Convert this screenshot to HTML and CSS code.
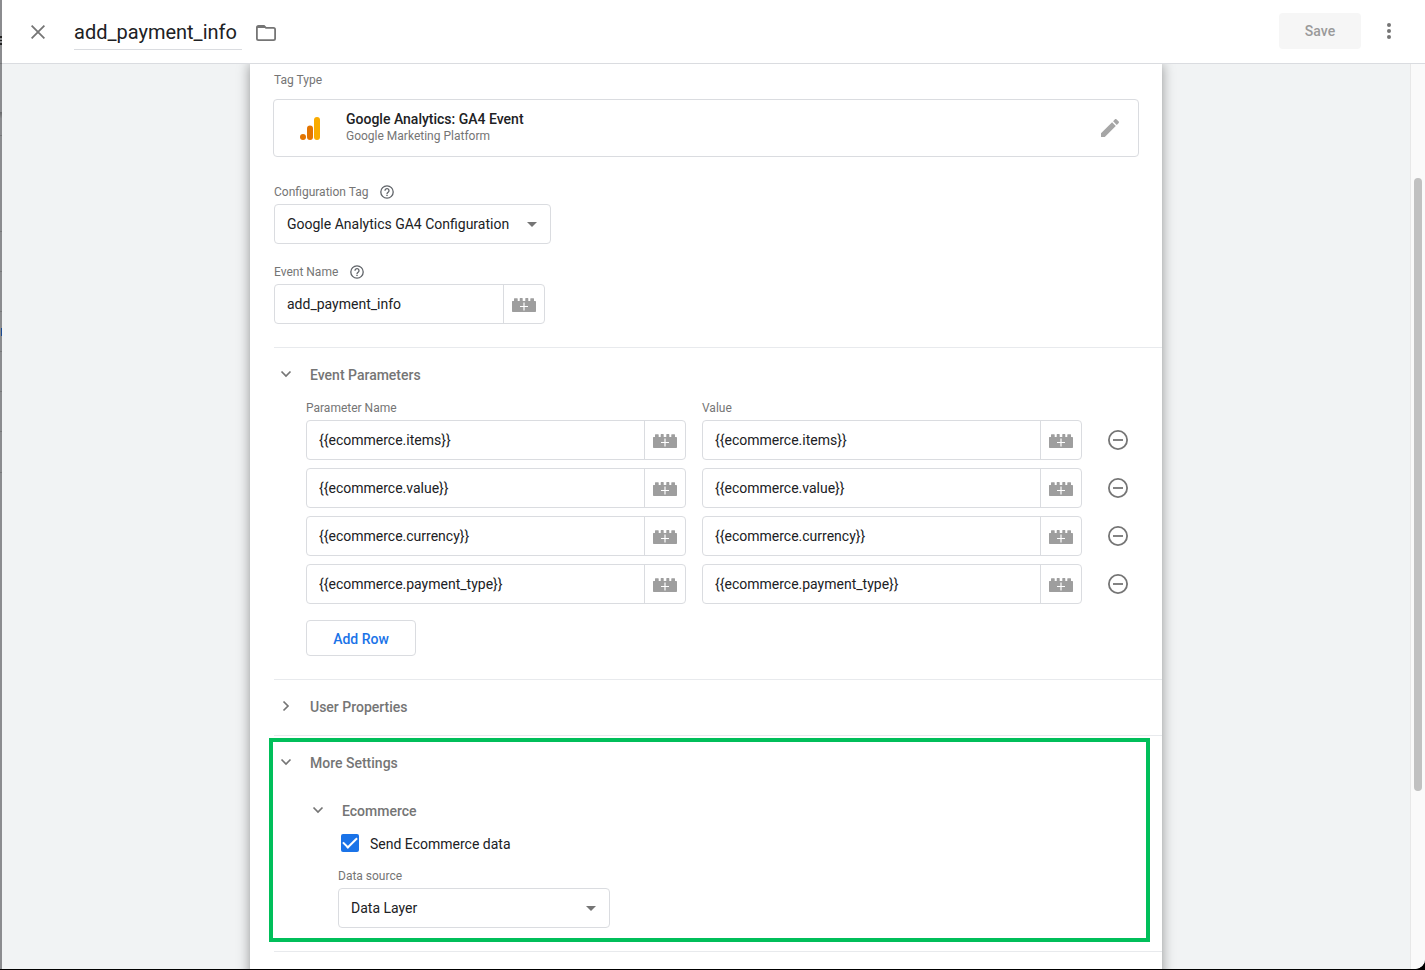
FILE: index.html
```html
<!DOCTYPE html>
<html lang="en">
<head>
<meta charset="utf-8">
<title>add_payment_info</title>
<meta name="viewport" content="width=device-width, initial-scale=1">
<link rel="stylesheet" href="styles.css">
</head>
<body>
<svg class="sprite" aria-hidden="true">
  <symbol id="brick" viewBox="0 0 24 14"><path fill="#9e9e9e" d="M.5 3H2V.8Q2 .3 2.500.3h2.700q.5 0 .5.500V3h2V.5Q7.700 0 8.200 0h2q.5 0 .5.500V3h2.600V.5q0-.5.5-.5h2q.5 0 .5.500V3h2V.8q0-.5.5-.5h2.700q.5 0 .5.500V3h1.300q.7 0 .7.700v9.600q0 .7-.7.700H.7q-.7 0-.7-.7V3.500Q0 3 .5 3z"/><path stroke="#fff" stroke-width="1.200" d="M12 4.500v8M8 8.500h8"/></symbol>
  <symbol id="help" viewBox="0 0 14 14"><circle cx="7" cy="7" r="6.200" fill="none" stroke="#5f6368" stroke-width="1.300"/><path fill="none" stroke="#5f6368" stroke-width="1.300" d="M5 5.700a2 2 0 1 1 3.300 1.400C7.500 7.700 7 8 7 8.900"/><path fill="#5f6368" d="M6.300 9.700h1.400V11H6.300z"/></symbol>
  <symbol id="minus" viewBox="0 0 20 20"><circle cx="10" cy="10" r="9.100" fill="none" stroke="#757575" stroke-width="1.800"/><path stroke="#757575" stroke-width="1.800" d="M5 10h10"/></symbol>
  <symbol id="chevron" viewBox="0 0 12 12"><path fill="none" stroke="#757575" stroke-width="1.700" d="M1.500 3.500L6 8l4.500-4.500"/></symbol>
  <symbol id="arrow" viewBox="0 0 10 5"><path fill="#757575" d="M0 0h10L5 5z"/></symbol>
</svg>
<div class="app">
  <div class="backdrop"></div>
  <div class="sheet">
    <header class="topbar">
      <button class="icon-btn close" type="button" aria-label="Close"><svg width="14" height="14" viewBox="0 0 14 14"><path stroke="#757575" stroke-width="1.800" d="M.6.600l12.800 12.800M13.400.6L.6 13.400"/></svg></button>
      <input class="title" type="text" aria-label="Tag name" value="add_payment_info">
      <button class="icon-btn folder" type="button" aria-label="Move to folder"><svg width="20" height="16" viewBox="0 0 20 16"><path fill="none" stroke="#757575" stroke-width="1.800" d="M.9 2.500v11q0 1.600 1.600 1.600h15q1.600 0 1.600-1.600v-9q0-1.600-1.600-1.600H10L8 .9H2.500Q.9.900.9 2.500z"/><path fill="#757575" d="M1 1h7l2 2H1z"/></svg></button>
      <div class="actions">
        <button class="save" type="button" disabled>Save</button>
        <button class="icon-btn" type="button" aria-label="More actions"><svg width="4" height="16" viewBox="0 0 4 16"><g fill="#757575"><circle cx="2" cy="2" r="2"/><circle cx="2" cy="8" r="2"/><circle cx="2" cy="14" r="2"/></g></svg></button>
      </div>
    </header>
    <div class="content">
      <main class="stage">
        <form class="card">
          <div class="label">Tag Type</div>
          <div class="tag-type">
            <svg class="ga" width="20" height="23" viewBox="0 0 20 23"><rect x="14" width="6" height="23" rx="3" fill="#f9ab00"/><rect x="7" y="8.500" width="6" height="14.500" rx="3" fill="#e37400"/><circle cx="3" cy="20" r="3" fill="#e37400"/></svg>
            <div class="tag-text"><div class="tag-name">Google Analytics: GA4 Event</div><div class="tag-sub">Google Marketing Platform</div></div>
            <button class="icon-btn" type="button" aria-label="Edit tag type"><svg width="18" height="18" viewBox="0 0 18 18"><path fill="#a6a6a6" d="M0 14.200V18h3.800L14.800 6.900 11.100 3.200zM17.700 4c.4-.4.400-1 0-1.400L15.400.3c-.4-.4-1-.4-1.400 0l-1.900 1.900L15.800 5.900z"/></svg></button>
          </div>
          <div class="field">
            <div class="label"><label for="config">Configuration Tag</label><svg class="help"><use href="#help"/></svg></div>
            <div class="select select-config"><select id="config"><option>Google Analytics GA4 Configuration</option></select><svg><use href="#arrow"/></svg></div>
          </div>
          <div class="field event-field">
            <div class="label"><label for="event">Event Name</label><svg class="help"><use href="#help"/></svg></div>
            <div class="combo combo-event"><input id="event" type="text" value="add_payment_info"><button type="button" aria-label="Insert variable"><svg><use href="#brick"/></svg></button></div>
          </div>
          <section class="section">
            <button class="heading" type="button" aria-expanded="true"><svg><use href="#chevron"/></svg>Event Parameters</button>
            <div class="params">
              <div class="label">Parameter Name</div><div class="label">Value</div><span></span>
              <div class="combo"><input type="text" aria-label="Parameter Name 1" value="{{ecommerce.items}}"><button type="button" aria-label="Insert variable"><svg><use href="#brick"/></svg></button></div>
              <div class="combo"><input type="text" aria-label="Value 1" value="{{ecommerce.items}}"><button type="button" aria-label="Insert variable"><svg><use href="#brick"/></svg></button></div>
              <button class="icon-btn remove" type="button" aria-label="Remove row"><svg><use href="#minus"/></svg></button>
              <div class="combo"><input type="text" aria-label="Parameter Name 2" value="{{ecommerce.value}}"><button type="button" aria-label="Insert variable"><svg><use href="#brick"/></svg></button></div>
              <div class="combo"><input type="text" aria-label="Value 2" value="{{ecommerce.value}}"><button type="button" aria-label="Insert variable"><svg><use href="#brick"/></svg></button></div>
              <button class="icon-btn remove" type="button" aria-label="Remove row"><svg><use href="#minus"/></svg></button>
              <div class="combo"><input type="text" aria-label="Parameter Name 3" value="{{ecommerce.currency}}"><button type="button" aria-label="Insert variable"><svg><use href="#brick"/></svg></button></div>
              <div class="combo"><input type="text" aria-label="Value 3" value="{{ecommerce.currency}}"><button type="button" aria-label="Insert variable"><svg><use href="#brick"/></svg></button></div>
              <button class="icon-btn remove" type="button" aria-label="Remove row"><svg><use href="#minus"/></svg></button>
              <div class="combo"><input type="text" aria-label="Parameter Name 4" value="{{ecommerce.payment_type}}"><button type="button" aria-label="Insert variable"><svg><use href="#brick"/></svg></button></div>
              <div class="combo"><input type="text" aria-label="Value 4" value="{{ecommerce.payment_type}}"><button type="button" aria-label="Insert variable"><svg><use href="#brick"/></svg></button></div>
              <button class="icon-btn remove" type="button" aria-label="Remove row"><svg><use href="#minus"/></svg></button>
            </div>
            <button class="add-row" type="button">Add Row</button>
          </section>
          <section class="section section-closed">
            <button class="heading" type="button" aria-expanded="false"><svg><use href="#chevron"/></svg>User Properties</button>
          </section>
          <section class="section">
            <button class="heading" type="button" aria-expanded="true"><svg><use href="#chevron"/></svg>More Settings</button>
            <div class="nested">
              <button class="heading" type="button" aria-expanded="true"><svg><use href="#chevron"/></svg>Ecommerce</button>
              <div class="nested-body">
                <label class="check"><input type="checkbox" checked>Send Ecommerce data</label>
                <div class="label"><label for="source">Data source</label></div>
                <div class="select select-source"><select id="source"><option>Data Layer</option></select><svg><use href="#arrow"/></svg></div>
              </div>
            </div>
            <div class="highlight"></div>
          </section>
          <section class="section section-next"></section>
        </form>
      </main>
      <div class="track"><div class="thumb"></div></div>
    </div>
  </div>
</div>
</body>
</html>
```
FILE: styles.css
```css
* { box-sizing: border-box; }

body {
  margin: 0;
  background: #000;
  color: #202124;
  font: 14px/20px Roboto, sans-serif;
}

button, input, select { font: inherit; color: inherit; margin: 0; }
button { background: none; border: 0; padding: 0; cursor: pointer; }
svg { display: block; flex: none; }
.sprite { position: absolute; width: 0; height: 0; }

.app {
  display: flex;
  height: calc(100vh - 1px);
  overflow: hidden;
  border-bottom-right-radius: 10px;
  background: #fff;
}

/* Dimmed page behind the sheet */
.backdrop {
  width: 2px;
  background:
    linear-gradient(#222, #222) 0 36px / 2px 2px no-repeat,
    linear-gradient(#222, #222) 0 40px / 2px 1px no-repeat,
    linear-gradient(#222, #222) 0 43px / 2px 2px no-repeat,
    linear-gradient(#1a4a93, #1a4a93) 1px 328px / 1px 8px no-repeat,
    linear-gradient(#68696b, #88898c) 0 112px / 2px 6px no-repeat,
    linear-gradient(#77787a, #77787a) 0 63px / 2px 1px no-repeat,
    linear-gradient(#77787a, #77787a) 0 135px / 2px 1px no-repeat,
    linear-gradient(#77787a, #77787a) 0 472px / 2px 1px no-repeat,
    repeating-linear-gradient(#77787a 0 1px, #8b8c8f 1px 40px) 0 231px / 2px 201px no-repeat,
    #8b8c8f;
}

.sheet { flex: 1; min-width: 0; display: flex; flex-direction: column; }

.topbar {
  display: flex;
  align-items: center;
  height: 64px;
  padding: 0 24px;
  border-bottom: 1px solid #dadce0;
  background: #fff;
}

.icon-btn { display: flex; align-items: center; justify-content: center; width: 24px; height: 24px; }

.title {
  width: 168px;
  height: 34px;
  margin: 2px 12px 0 24px;
  padding: 0;
  border: 0;
  border-bottom: 1px solid #dadce0;
  font-size: 20px;
}
.folder { margin-top: 2px; }

.actions { display: flex; align-items: center; gap: 16px; margin: 0 0 2px auto; }
.save {
  width: 82px;
  height: 36px;
  border-radius: 4px;
  background: #f6f6f6;
  color: #9a9a9a;
  font-weight: 500;
}

.content { flex: 1; min-height: 0; display: flex; }

.stage { flex: 1; min-width: 0; overflow: hidden; background: #f1f3f4; }

.card {
  max-width: 912px;
  min-height: 100%;
  margin: 0 auto;
  padding: 8px 0 0 24px;
  background: #fff;
  box-shadow: 0 0 12px rgba(0, 0, 0, .4);
}

.label {
  display: flex;
  align-items: center;
  gap: 12px;
  color: #757575;
  font-size: 12px;
  line-height: 16px;
}
.help { width: 14px; height: 14px; }

.tag-type {
  display: flex;
  align-items: center;
  height: 58px;
  margin: 11px 23px 27px -1px;
  padding: 0 16px 0 26px;
  border: 1px solid #dadce0;
  border-radius: 4px;
}
.tag-text { flex: 1; margin: 0 0 2px 26px; }
.tag-name { font-weight: 500; line-height: 18px; }
.tag-sub { color: #757575; font-size: 12px; line-height: 16px; }

.field { margin-bottom: 20px; }
.event-field { margin-bottom: 23px; }
.select, .combo { margin-top: 4px; }

.select { position: relative; }
.select-config { width: 277px; }
.select-source { width: 272px; }
.select select {
  appearance: none;
  width: 100%;
  height: 40px;
  padding: 0 36px 0 12px;
  border: 1px solid #dadce0;
  border-radius: 4px;
  background: #fff;
}
.select svg {
  position: absolute;
  right: 14px;
  top: 18px;
  width: 10px;
  height: 5px;
  pointer-events: none;
}

.combo {
  display: flex;
  height: 40px;
  border: 1px solid #dadce0;
  border-radius: 4px;
}
.combo-event { width: 271px; }
.combo input {
  flex: 1;
  min-width: 0;
  padding: 0 12px;
  border: 0;
  border-radius: 4px;
  background: none;
}
.combo button {
  display: flex;
  align-items: center;
  justify-content: center;
  width: 41px;
  padding-top: 2px;
  border-left: 1px solid #dadce0;
}
.combo svg { width: 24px; height: 14px; }

.section { position: relative; border-top: 1px solid #e8eaed; padding: 17px 0 23px; }
.section-closed { padding-bottom: 18px; }
.section-next { height: 40px; }

.heading {
  display: flex;
  align-items: center;
  gap: 18px;
  padding-left: 6px;
  color: #757575;
  font-weight: 500;
}
.heading svg { width: 12px; height: 12px; margin-bottom: 2px; }
.heading[aria-expanded="false"] svg { transform: rotate(-90deg); }

.params {
  display: grid;
  grid-template-columns: 1fr 1fr 40px;
  column-gap: 16px;
  row-gap: 4px;
  margin: 15px 24px 0 32px;
}
.params .combo { margin: 0 0 4px; }
.remove { width: 40px; height: 40px; }
.remove svg { width: 20px; height: 20px; }

.add-row {
  width: 110px;
  height: 36px;
  margin: 12px 0 0 32px;
  padding-top: 2px;
  border: 1px solid #dadce0;
  border-radius: 4px;
  color: #1a73e8;
  font-weight: 500;
}

.nested { margin: 28px 0 0 32px; }
.nested-body { margin: 13px 0 0 32px; }
.check { display: flex; align-items: center; gap: 11px; margin: 0 0 14px 3px; }
.check input {
  appearance: none;
  width: 18px;
  height: 18px;
  margin-bottom: 2px;
  border-radius: 2px;
  background: #1a73e8;
  display: grid;
  place-items: center;
}
.check input:checked::before {
  content: "";
  width: 12px;
  height: 6px;
  border: solid #fff;
  border-width: 0 0 2px 2px;
  transform: translateY(-2px) rotate(-45deg);
}

/* Callout frame around the expanded settings */
.highlight {
  position: absolute;
  inset: 2px 12px 9px -5px;
  border: 4px solid #00bf5a;
  pointer-events: none;
}

.track {
  display: grid;
  grid-template-rows: 114fr 613fr 178fr;
  width: 15px;
  padding: 0 3px;
  border-left: 1px solid #e8e8e8;
  background: #fafafa;
}
.thumb { grid-row: 2; border-radius: 4px; background: #c1c1c1; }
```
